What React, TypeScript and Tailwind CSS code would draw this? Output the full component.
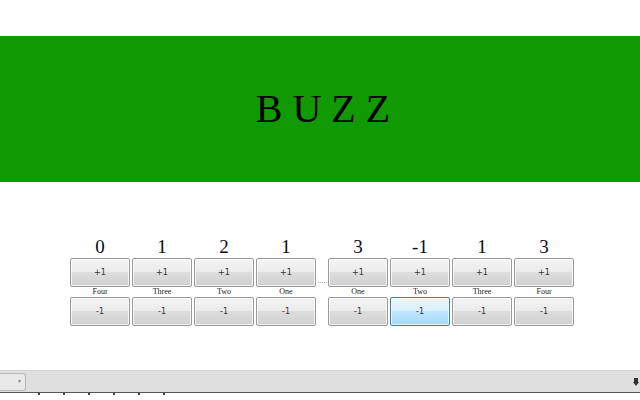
import React from "react";

type Col = { n: string; label: string; hot?: boolean };

const left: Col[] = [
  { n: "0", label: "Four" },
  { n: "1", label: "Three" },
  { n: "2", label: "Two" },
  { n: "1", label: "One" },
];
const right: Col[] = [
  { n: "3", label: "One" },
  { n: "-1", label: "Two", hot: true },
  { n: "1", label: "Three" },
  { n: "3", label: "Four" },
];

function Btn({ text, hot }: { text: string; hot?: boolean }) {
  const cls = hot
    ? "border-[#3c7fb1] bg-[linear-gradient(to_bottom,#eaf6fd_0%,#d9f0fc_50%,#bee6fd_50%,#a7d9f5_100%)]"
    : "border-[#9a9a9a] bg-[linear-gradient(to_bottom,#f4f4f4_0%,#ebebeb_50%,#dddddd_50%,#d0d0d0_100%)]";
  return (
    <div
      className={
        "w-[60px] h-[29px] border rounded-[2px] flex items-center justify-center text-[8px] text-[#333] shadow-[inset_0_0_0_1px_rgba(255,255,255,0.7)] " +
        cls
      }
      style={{ fontFamily: '"DejaVu Sans", "Liberation Sans", sans-serif' }}
    >
      {text}
    </div>
  );
}

function Column({ c }: { c: Col }) {
  return (
    <div className="flex flex-col items-center w-[60px]">
      <div
        className="h-[23px] text-[19px] leading-[23px] text-[#0a0a1a]"
        style={{ fontFamily: '"Liberation Serif", serif' }}
      >
        {c.n}
      </div>
      <Btn text="+1" />
      <div
        className="h-[10px] text-[8px] leading-[10px] text-[#222222]"
        style={{ fontFamily: '"Liberation Serif", serif' }}
      >
        {c.label}
      </div>
      <Btn text="-1" hot={c.hot} />
    </div>
  );
}

export default function App() {
  return (
    <div className="w-[640px] h-[400px] bg-white overflow-hidden flex flex-col">
      <div className="h-[36px] shrink-0" />
      <div className="h-[146px] shrink-0 bg-[#109900] flex items-center justify-center pl-[6px]">
        <span
          className="text-[40px] leading-[40px] text-black"
          style={{ fontFamily: '"Liberation Serif", serif' }}
        >
          B U Z Z
        </span>
      </div>
      <div className="h-[53px] shrink-0" />
      <div className="h-[91px] shrink-0 flex pl-[70px]">
        <div className="flex gap-[2px]">
          {left.map((c, i) => (
            <Column key={i} c={c} />
          ))}
        </div>
        <div className="w-[12px] flex justify-center">
          <div className="mt-[47px] w-[9px] h-0 border-t border-dotted border-[#b5b5b5]" />
        </div>
        <div className="flex gap-[2px]">
          {right.map((c, i) => (
            <Column key={i} c={c} />
          ))}
        </div>
      </div>
      <div className="h-[44px] shrink-0" />
      <div className="h-[22px] shrink-0 bg-[#dfdfdf] border-t border-[#d2d2d2] flex items-center justify-between">
        <div className="w-[26px] h-[18px] bg-[#e9e9e9] border border-l-0 border-[#b8b8b8] rounded-r-[3px] flex items-center justify-end pr-[3px]">
          <span className="text-[5px] text-[#777] leading-none">▼</span>
        </div>
        <svg width="6" height="8" viewBox="0 0 6 8" className="mr-[1px]">
          <rect x="1" y="0" width="4" height="4" fill="#333" />
          <path d="M0 4 L6 4 L3 8 Z" fill="#333" />
        </svg>
      </div>
      <div className="h-[1px] shrink-0 bg-[#555]" />
      <div className="flex-1 flex items-start pl-[38px] gap-[23px]">
        {[0, 1, 2, 3, 4, 5].map((i) => (
          <div key={i} className="w-[2px] h-[2px] bg-[#444]" />
        ))}
      </div>
    </div>
  );
}
